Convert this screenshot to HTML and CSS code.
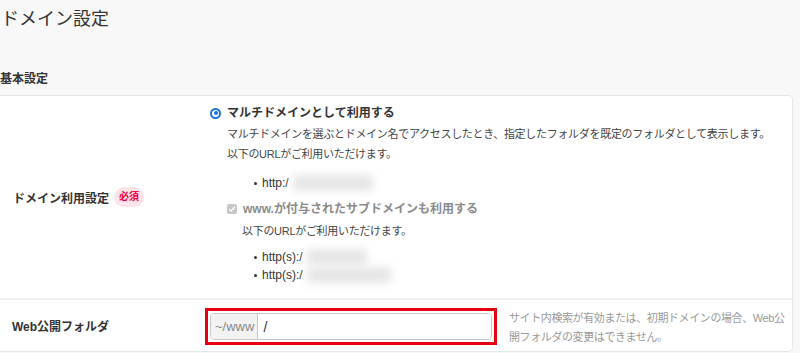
FILE: index.html
```html
<!DOCTYPE html>
<html lang="ja">
<head>
  <meta charset="UTF-8">
  <title>ドメイン設定</title>
  <link rel="stylesheet" href="styles.css">
</head>
<body>
  <h1 class="title">ドメイン設定</h1>
  <h2 class="section">基本設定</h2>

  <div class="card">
    <div class="row row-domain">
      <div class="label">ドメイン利用設定 <span class="req">必須</span></div>
      <div class="field">
        <label class="radio"><span class="radio-mark"></span>マルチドメインとして利用する</label>
        <p class="desc">マルチドメインを選ぶとドメイン名でアクセスしたとき、指定したフォルダを既定のフォルダとして表示します。<br>以下のURLがご利用いただけます。</p>
        <ul class="urls">
          <li>http:/<span class="masked m1"></span></li>
        </ul>
        <div class="sub">
          <label class="check"><span class="check-box"><svg viewBox="0 0 10 10" width="10" height="10"><path d="M2.2 5.2l1.9 1.9 3.8-4" fill="none" stroke="#fff" stroke-width="1.4"/></svg></span>www.が付与されたサブドメインも利用する</label>
          <p class="desc">以下のURLがご利用いただけます。</p>
          <ul class="urls">
            <li>http(s):/<span class="masked m2"></span></li>
            <li>http(s):/<span class="masked m3"></span></li>
          </ul>
        </div>
      </div>
    </div>

    <div class="row row-folder">
      <div class="label">Web公開フォルダ</div>
      <div class="field field-folder">
        <div class="highlight">
          <div class="input-group">
            <span class="addon">~/www</span>
            <input class="input" type="text" value="/">
          </div>
        </div>
        <p class="help">サイト内検索が有効または、初期ドメインの場合、Web公開フォルダの変更はできません。</p>
      </div>
    </div>
  </div>
</body>
</html>
```

FILE: styles.css
```css
body { margin: 0; background: #f8f8f8; color: #333; font-family: "Liberation Sans", "Noto Sans CJK JP", sans-serif; }
.title { font-size: 18px; font-weight: normal; margin: 0; padding: 6px 0 0 1px; line-height: 26px; }
.section { font-size: 12px; font-weight: bold; margin: 38px 0 0 0; line-height: 18px; color: #333; }

.card { background: #fff; border: 1px solid #e6e6e6; border-left: 0; border-radius: 0 5px 5px 0; margin: 7px 7px 0 0; }
.row { display: grid; grid-template-columns: 210px 1fr; }
.row + .row { border-top: 2px solid #efefef; }
.label { display: flex; align-items: center; padding-left: 13px; font-size: 12px; font-weight: bold; color: #333; }
.req { display: inline-block; margin-left: 5px; padding: 0 5px; height: 20px; line-height: 20px; border-radius: 10px; background: #fde4ea; color: #e6003c; font-size: 10px; }

.field { padding: 7px 0 14px 0; font-size: 11px; }
.radio { display: flex; align-items: center; font-size: 12px; font-weight: bold; line-height: 20px; color: #333; }
.radio-mark { width: 11px; height: 11px; box-sizing: border-box; border: 2px solid #1a6fd8; border-radius: 50%; margin-right: 6px; position: relative; }
.radio-mark::after { content: ""; position: absolute; left: 1.5px; top: 1.5px; width: 4px; height: 4px; border-radius: 50%; background: #1a6fd8; }
.desc { margin: 1px 0 0 17px; line-height: 20px; color: #444; letter-spacing: -0.3px; }
.urls { list-style: none; margin: 10px 0 0 17px; padding: 0 0 0 35px; font-size: 12px; line-height: 18px; color: #333; }
.urls li { position: relative; display: flex; align-items: center; }
.urls li::before { content: ""; position: absolute; left: -8px; top: 8px; width: 3px; height: 3px; border-radius: 50%; background: #333; }
.masked { display: inline-block; height: 16px; background: #e6e6e6; filter: blur(4px); }
.m1 { width: 80px; margin-left: 4px; }
.m2 { width: 60px; margin-left: 4px; }
.m3 { width: 84px; margin-left: 4px; }

.sub { margin: 7px 0 0 17px; }
.check { display: flex; align-items: center; font-size: 12px; font-weight: bold; line-height: 20px; color: #8a8a8a; }
.check-box { width: 10px; height: 10px; border-radius: 2px; background: #c6c6c6; margin-right: 6px; display: flex; }
.sub .desc { margin-left: 15px; margin-top: 2px; color: #444; }
.sub .urls { margin-top: 7px; margin-left: 0; padding-left: 35px; }

.row-folder .label { padding-left: 12px; }
.field-folder { display: flex; align-items: flex-start; padding: 8px 0 4px 0; margin-left: -5px; }
.highlight { border: 3px solid #e60012; padding: 2px; width: 282px; flex: none; }
.input-group { display: flex; height: 25px; border: 1px solid #c8c8c8; border-radius: 4px; overflow: hidden; }
.addon { display: flex; align-items: center; padding: 0 3px 0 4px; background: #f2f2f2; border-right: 1px solid #c8c8c8; color: #888; font-size: 13px; }
.input { flex: 1; border: 0; padding: 0 5px; font-family: "Liberation Sans", sans-serif; font-size: 14px; color: #333; outline: none; }
.help { margin: 1px 0 0 12px; width: 282px; font-size: 11px; line-height: 19px; color: #999; letter-spacing: -0.4px; }
```
